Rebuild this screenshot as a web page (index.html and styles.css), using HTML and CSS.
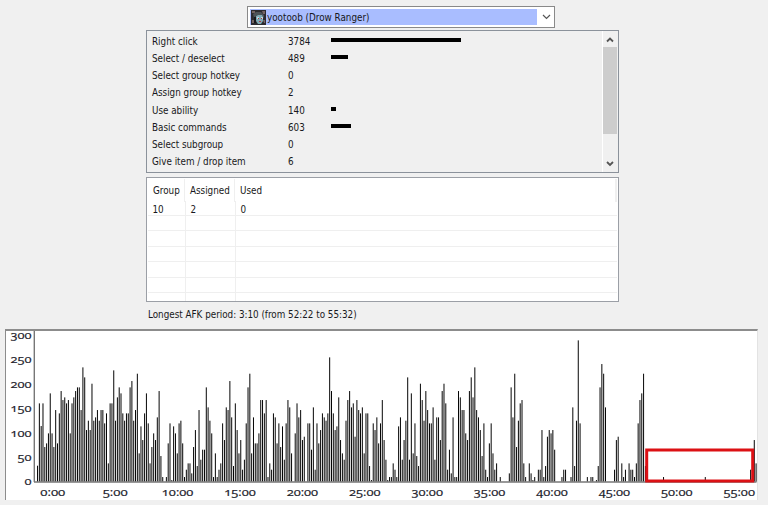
FILE: index.html
```
<!DOCTYPE html>
<html lang="en">
<head>
    <meta charset="UTF-8">
    <title>Player Actions</title>
    <link rel="stylesheet" href="styles.css">
</head>
<body>
    <div class="container">
        <div class="player-select">
            <div class="player-value">
                <svg class="avatar" width="15" height="15" viewBox="0 0 15 15">
                    <rect width="15" height="15" fill="#2c2b30"/>
                    <path d="M1 1h3v2H1zM11 1h3v3h-2zM1 10h2v3H1zM12 10h2v3h-1z" fill="#756462"/>
                    <path d="M2 4l3-2h5l3 3v3l-2-2-5-1-3 3z" fill="#4d5358"/>
                    <path d="M5 6l2-1h4l1 2v4l-2 3H7l-2-3z" fill="#7fa9b4"/>
                    <path d="M6 7h2v2H6zM10 7h2v2h-2z" fill="#b9dade"/>
                    <path d="M7 8h1v1H7zM10 8h1v1h-1zM8 11h2v1H8z" fill="#b8323c"/>
                    <path d="M3 7h2v6H3z" fill="#17181d"/>
                </svg>
                <span>yootoob (Drow Ranger)</span>
            </div>
            <svg class="arrow" width="9" height="6" viewBox="0 0 9 6"><path d="M1 1l3.5 3.5L8 1"/></svg>
        </div>

        <div class="panel stats">
            <div class="stat-list">
                <div class="stat"><span>Right click</span><span>3784</span><i class="bar" style="width: 130px"></i></div>
                <div class="stat"><span>Select / deselect</span><span>489</span><i class="bar" style="width: 17px"></i></div>
                <div class="stat"><span>Select group hotkey</span><span>0</span></div>
                <div class="stat"><span>Assign group hotkey</span><span>2</span></div>
                <div class="stat"><span>Use ability</span><span>140</span><i class="bar" style="width: 5px"></i></div>
                <div class="stat"><span>Basic commands</span><span>603</span><i class="bar" style="width: 20px"></i></div>
                <div class="stat"><span>Select subgroup</span><span>0</span></div>
                <div class="stat"><span>Give item / drop item</span><span>6</span></div>
            </div>
            <div class="scrollbar">
                <svg class="scroll-arrow" width="14" height="16" viewBox="0 0 14 16"><path d="M4 10.5l3-3 3 3"/></svg>
                <div class="thumb"></div>
                <svg class="scroll-arrow down" width="14" height="16" viewBox="0 0 14 16"><path d="M4 6l3 3 3-3"/></svg>
            </div>
        </div>

        <div class="panel groups">
            <div class="group-row header"><span>Group</span><span>Assigned</span><span>Used</span></div>
            <div class="group-row first"><span>10</span><span>2</span><span>0</span></div>
            <div class="group-row"><span></span><span></span><span></span></div>
            <div class="group-row"><span></span><span></span><span></span></div>
            <div class="group-row"><span></span><span></span><span></span></div>
            <div class="group-row"><span></span><span></span><span></span></div>
            <div class="group-row"><span></span><span></span><span></span></div>
            <div class="group-row last"><span></span><span></span><span></span></div>
        </div>

        <p class="afk">Longest AFK period: 3:10 (from 52:22 to 55:32)</p>
    </div>

    <div class="chart">
        <svg id="apm" width="751" height="169" viewBox="6 331 751 169"></svg>
    </div>

    <script src="chart.js"></script>
</body>
</html>
```
FILE: styles.css
```
* {
    box-sizing: border-box;
}
body {
    margin: 0;
    width: 768px;
    height: 505px;
    overflow: hidden;
    background: #f0f0f0;
    color: #181820;
    font-family: "DejaVu Sans Condensed", "DejaVu Sans", sans-serif;
    font-stretch: condensed;
    font-size: 9.8px;
    letter-spacing: -0.01px;
}
.container {
    width: 474px;
    margin-left: 146px;
    padding-top: 6px;
}
.player-select {
    display: flex;
    align-items: center;
    width: 308px;
    height: 22px;
    margin-left: 101px;
    padding: 2px;
    background: white;
    border: 1px solid #898989;
}
.player-value {
    display: flex;
    align-items: center;
    width: 287px;
    height: 16px;
    padding-left: 1px;
    background: #a9bdff;
}
.avatar {
    margin-right: 1px;
}
.arrow {
    margin-left: 5px;
}
.arrow path {
    fill: none;
    stroke: #555;
    stroke-width: 1.2;
}
.panel {
    width: 473px;
    border: 1px solid #8b929b;
}
.stats {
    display: flex;
    justify-content: space-between;
    height: 143px;
    margin-top: 2px;
}
.stat-list {
    padding: 1px 0 0 5px;
}
.stat {
    display: grid;
    grid-template-columns: 136px 43px 1fr;
    height: 17.15px;
    line-height: 19.5px;
    white-space: nowrap;
}
.bar {
    display: block;
    height: 4px;
    margin-top: 6px;
    background: black;
}
.scrollbar {
    display: flex;
    flex-direction: column;
    width: 16px;
    padding-right: 1px;
    border-left: 1px solid white;
}
.scroll-arrow path {
    fill: none;
    stroke: #555;
    stroke-width: 1.8;
}
.thumb {
    width: 14px;
    height: 87px;
    background: #cdcdcd;
}
.down {
    margin-top: 22px;
}
.groups {
    height: 125px;
    margin-top: 4px;
    padding: 1px;
    background: white;
    border-color: #9b9fa6;
    overflow: hidden;
}
.group-row {
    display: grid;
    grid-template-columns: 38px 50px 1fr;
    height: 15.4px;
    border-bottom: 1px solid #efefef;
}
.group-row span {
    padding-left: 5px;
    border-right: 1px solid #efefef;
}
.group-row span:last-child {
    border-right: none;
}
.header {
    grid-template-columns: 37px 50px 1fr;
    height: 22px;
    line-height: 23px;
    border-bottom: none;
}
.header span:last-child {
    border-right: 2px solid #f0f0f0;
}
.first {
    height: 15px;
    line-height: 17.5px;
}
.first span {
    height: 14px;
    padding-left: 4.5px;
}
.last {
    border-bottom: none;
}
.afk {
    margin: 5px 0 0 2px;
    line-height: 15px;
}
.chart {
    width: 753px;
    height: 171px;
    margin: 7px 0 0 5px;
    background: white;
    border-top: 2px solid #8c8c8c;
    border-left: 1px solid #8c8c8c;
    border-right: 1px solid #e3e3e3;
}
.chart svg {
    display: block;
    overflow: visible;
}
.chart text {
    fill: #20202a;
    stroke: #20202a;
    stroke-width: 0.2;
    font-family: "Open Sans", "Noto Sans", sans-serif;
    font-size: 10.5px;
    font-stretch: normal;
    letter-spacing: 0;
    font-variant-numeric: oldstyle-nums;
}
.axis {
    stroke: #777;
    stroke-width: 1.4;
}
.afk-box {
    fill: none;
    stroke: #dc1014;
    stroke-width: 3;
}
```
FILE: chart.js
```
const svg = document.getElementById('apm');
const LEFT = 37.05;
const STEP = 1.8145;
const BASE = 481.7;

// Bar tops in thirds of a pixel, 470 is an empty slot
const tops = [
    422,235,303,235,366,355,325,205,325,366,255,355,265,198,225,217,235,225,325,235,
    217,198,187,187,255,127,157,315,287,315,176,287,277,255,287,255,255,295,265,415,
    235,235,136,287,217,187,205,265,287,265,265,187,168,287,255,146,385,304,345,265,
    205,295,415,366,325,345,277,198,393,456,470,456,355,295,465,304,325,385,295,287,
    355,456,434,415,415,445,366,315,423,255,404,374,374,187,247,287,325,456,385,456,
    434,415,295,345,247,255,168,277,423,235,315,385,345,434,404,295,187,146,385,277,
    355,355,325,225,225,265,225,456,415,434,265,277,355,295,366,304,404,295,225,247,
    385,470,325,235,277,255,345,335,470,295,295,374,247,434,295,355,315,265,277,287,
    265,97,198,265,315,304,217,345,385,404,287,225,198,247,235,335,225,255,265,247,
    385,265,265,423,465,295,315,277,355,295,225,345,404,465,456,456,415,434,456,304,
    277,404,345,287,157,404,205,385,295,393,423,176,225,287,198,255,295,295,247,404,
    277,277,345,198,176,235,434,374,445,277,456,456,198,217,255,255,325,345,198,157,
    217,127,255,277,315,393,295,434,456,355,295,385,434,415,470,456,470,470,470,470,
    445,187,277,146,366,287,235,225,415,456,470,415,445,465,456,470,434,434,315,456,
    423,335,315,325,315,374,470,470,470,456,434,434,470,470,456,247,423,287,46,295,
    470,470,470,456,470,456,456,470,465,423,187,117,146,247,470,470,470,470,434,345,
    335,470,415,456,434,470,415,434,434,456,415,295,225,205,146,423
];
// Almost idle until the end of the game
const late = { 345: 456, 352: 465, 368: 456, 390: 465, 393: 434, 395: 345, 396: 415 };

function add(name, attrs, text) {
    const el = document.createElementNS('http://www.w3.org/2000/svg', name);
    for (const key in attrs) {
        el.setAttribute(key, attrs[key]);
    }
    if (text) {
        el.textContent = text;
    }
    svg.appendChild(el);
}

function addBar(i, top) {
    const height = (470 - top) / 3;
    if (height > 0) {
        add('rect', { x: LEFT + i * STEP, y: BASE - height, width: 0.98, height: height });
    }
}

tops.forEach((top, i) => addBar(i, top));
for (const i in late) {
    addBar(Number(i), late[i]);
}

add('line', { class: 'axis', x1: 34.3, y1: 331, x2: 34.3, y2: 482 });
add('line', { class: 'axis', x1: 34, y1: 482, x2: 756.5, y2: 482 });

// Axis labels
for (let v = 0; v <= 300; v += 50) {
    const width = v >= 100 ? 21 : v ? 14 : 7;
    add('text', { x: 31.5 - width, y: 485.4 - v * 0.488, textLength: width, lengthAdjust: 'spacingAndGlyphs' }, String(v));
}
for (let m = 0; m <= 55; m += 5) {
    const width = m < 10 ? 25 : 31.5;
    add('text', { x: 52.8 + m * 12.48 - width / 2, y: 496, textLength: width, lengthAdjust: 'spacingAndGlyphs' }, m + ':00');
}

add('rect', { class: 'afk-box', x: 646.7, y: 450, width: 106, height: 31 });
```
